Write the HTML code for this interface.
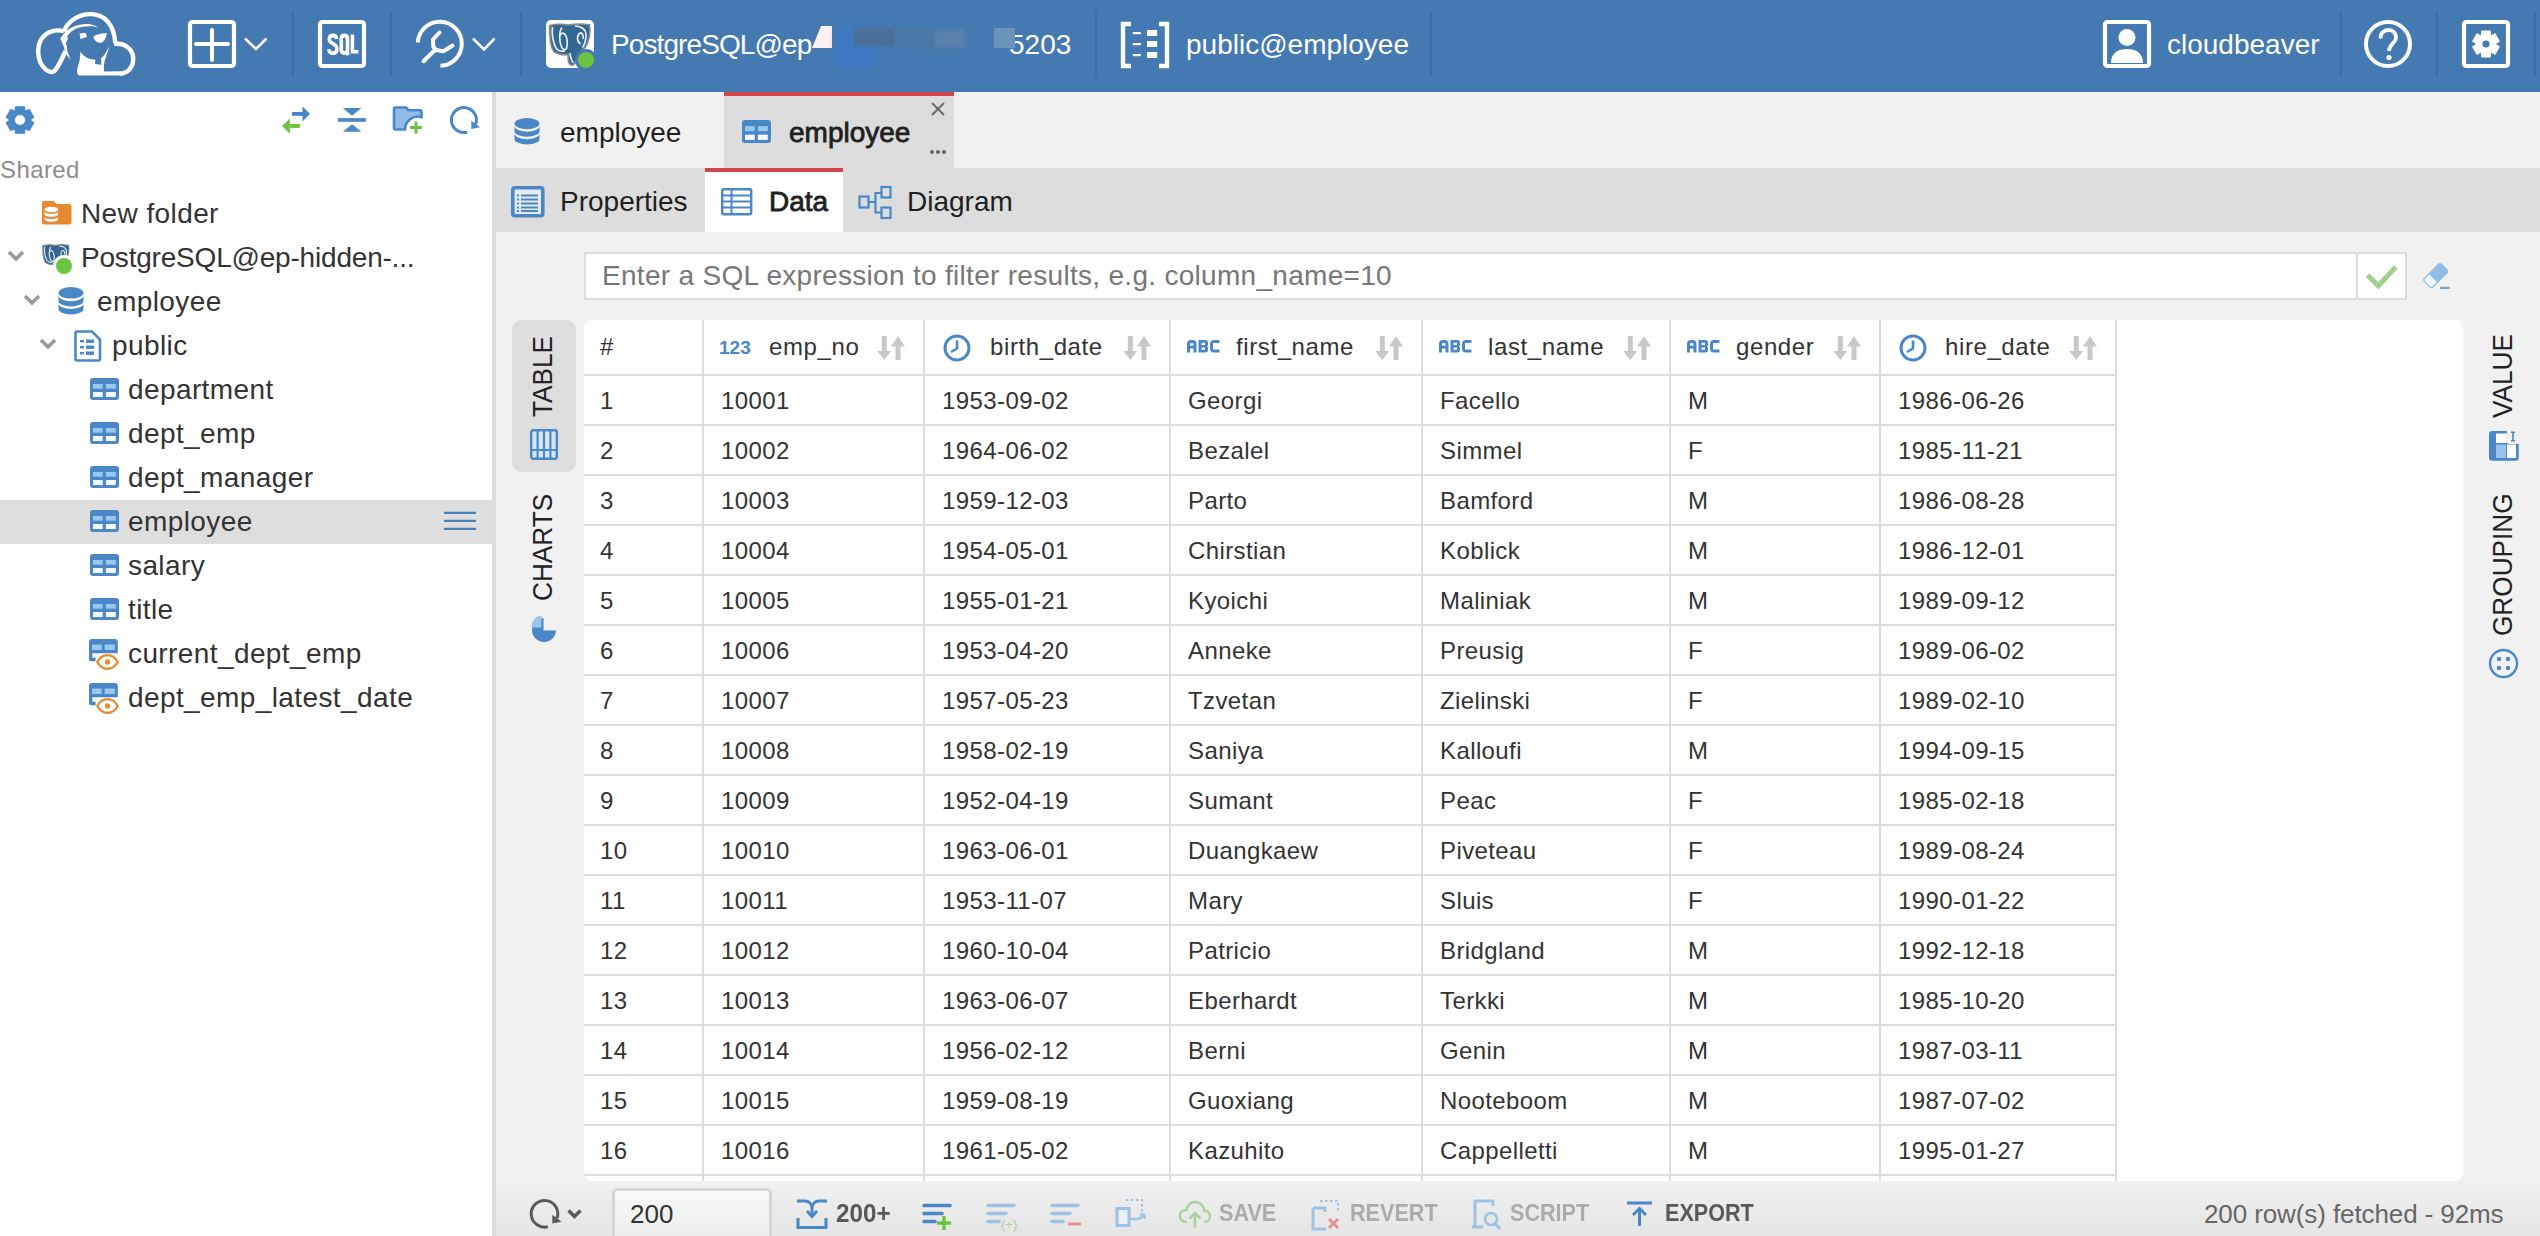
<!DOCTYPE html>
<html><head><meta charset="utf-8"><title>CloudBeaver</title>
<style>
*{box-sizing:border-box;margin:0;padding:0}
html,body{width:2540px;height:1236px;overflow:hidden;background:#f1f1f1;font-family:"Liberation Sans",sans-serif;position:relative}
.a{position:absolute}
.t{position:absolute;white-space:nowrap;line-height:1}
svg{position:absolute;overflow:visible}
#top{left:0;top:0;width:2540px;height:92px;background:#4479b1}
.sep{position:absolute;top:12px;width:2px;height:64px;background:#3c6ea3}
.tw{color:#fff;font-size:28px;top:30.5px}
#side{left:0;top:92px;width:492px;height:1144px;background:#fff}
#sdiv{left:492px;top:92px;width:4px;height:1144px;background:#dcdcdc}
.tr{font-size:28px;color:#333;letter-spacing:0.4px}
.tab{font-size:28px;color:#1f1f1f}
.tb{-webkit-text-stroke:0.8px #1f1f1f}
.cell{font-size:24px;color:#333;letter-spacing:0.4px}
.hdr{font-size:24px;color:#333;letter-spacing:0.6px}
.bt{font-size:24px;font-weight:bold;color:#ababab;transform-origin:0 0;transform:scaleX(.9)}
.vt{font-size:28px;color:#222;transform-origin:0 0;transform:rotate(-90deg) scaleX(.935)}
</style></head><body>
<div id="top" class="a"></div>
<div class="sep" style="left:292px"></div>
<div class="sep" style="left:390px"></div>
<div class="sep" style="left:520px"></div>
<div class="sep" style="left:1095px"></div>
<div class="sep" style="left:1430px"></div>
<div class="sep" style="left:2340px"></div>
<div class="sep" style="left:2436px"></div>
<div class="sep" style="left:2534px"></div>
<svg style="left:36px;top:11px" width="100" height="66" viewBox="0 0 100 66">
<g fill="none" stroke="#fff" stroke-width="4.4">
<path d="M27.9 20.6 C31 11, 42 3, 54.7 3.1 C68 3, 78 13, 79.3 32"/>
<path d="M78 32.9 C90 31.5, 97.5 39, 97.2 48.5 C97 57, 91 62.5, 84 62.5"/>
<path d="M28 20.2 C20 18, 11 20, 5.5 28 C0.5 36, 1.5 48, 6.5 55 C10 60, 15 62.5, 18.5 60 C22 56, 26 48, 29.5 40"/>
</g>
<g fill="#fff">
<path d="M24.5 27.5 C29 19, 38 13.5, 49.5 13 C55 12.8, 59.5 14, 62 16.8 C57 15, 52 15, 47 15.8 C38 17, 32 22, 29 30 Z"/>
<path d="M24.2 27 L32.4 26.2 L28.3 36.7 Z"/>
<path d="M27.9 33.7 C28 40, 30.5 45, 35.4 48.6 C32 44, 30.8 40, 31 34 Z"/>
<path d="M44.3 40.4 C44.5 45, 43.5 52, 41.3 57.5 C40.5 61, 41.5 63.5, 43 64.6 L87 64.6 L84 60.3 L68.1 60.5 C67.5 56, 68 51, 69.6 47.1 C71 43, 72.5 39, 73 35.2 C71 40, 68 45, 65.2 47 L65.2 53.8 L59.2 53 L59.2 48.6 C53 48.5, 47.5 45.5, 44.3 40.4 Z"/>
<path d="M43.6 22.5 L49.5 21.8 L51 25.9 L44.3 28.1 Z"/>
<path d="M57.3 26.2 C59 24, 63 22.5, 71.1 22.1 C70.5 25, 69.5 27, 68.9 28.5 C67.5 30.5, 66.5 31.5, 65.2 31.8 C63 31.8, 61.5 31.3, 60.7 30.7 C59 29.5, 58 28, 57.3 26.2 Z"/>
</g>
</svg>
<svg style="left:186px;top:18px" width="84" height="52" viewBox="0 0 84 52">
<rect x="4" y="4" width="44" height="44" rx="2.5" fill="none" stroke="#fff" stroke-width="4.2"/>
<path d="M26 12V42M10 26H42" stroke="#fff" stroke-width="4" stroke-linecap="round"/>
<path d="M59 20.5L70 31L80.5 20.5" fill="none" stroke="#fff" stroke-width="2.6"/>
</svg>
<svg style="left:316px;top:18px" width="52" height="52" viewBox="0 0 52 52">
<rect x="4" y="4" width="44" height="44" rx="2.5" fill="none" stroke="#fff" stroke-width="4.2"/>
<g fill="none" stroke="#fff" stroke-width="3.6">
<path d="M20.6 21 C20.4 18.8, 19.2 17.4, 17 17.4 C14.6 17.4, 13.3 18.9, 13.3 21.2 C13.3 23.6, 15 24.7, 17 25.6 C19.4 26.7, 20.9 28, 20.9 31 C20.9 33.9, 19.5 35.2, 17 35.2 C14.5 35.2, 13 33.8, 12.9 31.2"/>
<path d="M28.4 17.4 C26.3 17.4, 25.3 18.7, 25.3 21 V31.6 C25.3 33.9, 26.3 35.2, 28.4 35.2 C30.5 35.2, 31.5 33.9, 31.5 31.6 V21 C31.5 18.7, 30.5 17.4, 28.4 17.4Z"/>
<path d="M29.3 33 L32.5 37"/>
<path d="M36.4 16.6 V33.7 H42.4"/>
</g>
</svg>
<svg style="left:412px;top:16px" width="88" height="56" viewBox="0 0 88 56">
<path d="M5.8 26.5 A22 22 0 1 1 28.5 49.8" fill="none" stroke="#fff" stroke-width="4"/>
<path d="M11.5 45.2 L23.5 33.5" stroke="#fff" stroke-width="4" stroke-linecap="round"/>
<path d="M27.5 16.5 L21 23.5 L21.3 30.5 L23.8 34 L31.5 35.3 L40.5 29.5" fill="none" stroke="#fff" stroke-width="4" stroke-linecap="round" stroke-linejoin="round"/>
<path d="M61 22.5L72 33.5L82.5 22.5" fill="none" stroke="#fff" stroke-width="2.6"/>
</svg>
<div class="a" style="left:546px;top:20px;width:48px;height:48px;background:#fff;border-radius:5px"></div>
<svg style="left:549px;top:23px" width="42" height="43" viewBox="0 0 42 43">
<path d="M0.6 2.5 C8 0.5, 14 1, 20 2 C27 0.5, 34 0.8, 40.5 1.8 C41.5 9, 40 18, 36.6 23.8 C35 26, 34 27, 32.7 27.2 C30 31, 28 36, 26.4 39.3 C25.5 41.5, 24.5 42.3, 23 42.3 C21 42, 20 40.5, 19.6 39.3 C19 36, 19.2 33, 19.1 31.6 C16 31.8, 13 31.5, 10.9 31.1 C8 30.5, 6 29.5, 5 28.7 C3 26, 2 23, 1.7 20 C1 15, 0.5 8, 0.6 2.5 Z" fill="#336791" stroke="#8a8a8a" stroke-width="1.6"/>
<g fill="none" stroke="#e8eef8" stroke-width="1.7">
<path d="M3.5 4 C2.5 10, 4 20, 7 25 C9 28, 13 28.5, 16 28"/>
<path d="M13 4.5 C10 8, 10 18, 12.5 24 C13.5 26.5, 16 27.5, 17.5 25.5 C19 22, 18.5 13, 15 10.5 C13 9.5, 11.5 11, 11 13"/>
<path d="M26 3 C33 3.5, 37 6, 37 12 C37 17, 36 21, 33.5 24.5"/>
<path d="M31.5 21 C28 19, 27.5 13, 30.5 10.5 C32.5 9, 35 11.5, 34 16"/>
<path d="M21 30 C21.5 34, 22.5 38, 24.5 40"/>
</g>
</svg>
<div class="a" style="left:575px;top:49px;width:22px;height:22px;border-radius:50%;background:#4479b1"></div>
<div class="a" style="left:578px;top:52px;width:16px;height:16px;border-radius:50%;background:#6cc241"></div>
<div class="t tw" style="left:611px;letter-spacing:-0.9px">PostgreSQL@ep</div>
<div class="a" style="left:812px;top:26px;width:20px;height:22px;background:#fdf1f3;clip-path:polygon(45% 0,100% 0,100% 100%,0 100%)"></div>
<div class="a" style="left:836px;top:28px;width:40px;height:40px;background:#3d79c2;filter:blur(3px)"></div>
<div class="a" style="left:854px;top:28px;width:40px;height:18px;background:#4a6f98;filter:blur(1px)"></div>
<div class="a" style="left:895px;top:28px;width:44px;height:20px;background:#4a78a6;filter:blur(2px)"></div>
<div class="a" style="left:935px;top:30px;width:30px;height:18px;background:#5a82ab;filter:blur(2px)"></div>

<div class="t tw" style="left:1009px">5203</div>
<div class="a" style="left:994px;top:28px;width:21px;height:20px;background:#6b93bc"></div>
<svg style="left:1118px;top:20px" width="54" height="48" viewBox="0 0 54 48">
<path d="M13 4H5V46H13" fill="none" stroke="#fff" stroke-width="4.4"/>
<path d="M41 4H49V46H41" fill="none" stroke="#fff" stroke-width="4.4"/>
<rect x="14.8" y="12" width="8.2" height="2.2" fill="#fff"/>
<rect x="14.8" y="23" width="8.2" height="2.2" fill="#fff"/>
<rect x="14.8" y="34" width="8.2" height="2.2" fill="#fff"/>
<rect x="29" y="10" width="10.2" height="6" fill="#fff"/>
<rect x="29" y="21" width="10.2" height="6" fill="#fff"/>
<rect x="29" y="32" width="10.2" height="6" fill="#fff"/>
</svg>
<div class="t tw" style="left:1186px">public@employee</div>
<svg style="left:2101px;top:18px" width="52" height="52" viewBox="0 0 52 52">
<rect x="4" y="4" width="44" height="44" rx="2.5" fill="none" stroke="#fff" stroke-width="4.2"/>
<circle cx="26" cy="19.5" r="8.5" fill="#fff"/>
<path d="M10 45 C10 35 17 31 26 31 C35 31 42 35 42 45 Z" fill="#fff"/>
</svg>
<div class="t tw" style="left:2167px">cloudbeaver</div>
<svg style="left:2362px;top:18px" width="52" height="52" viewBox="0 0 52 52">
<circle cx="26" cy="26" r="22" fill="none" stroke="#fff" stroke-width="4"/>
<path d="M18.5 20.5 C18.5 15 22 12 26.5 12 C31 12 34 15 34 19.5 C34 25 27 26 27 33" fill="none" stroke="#fff" stroke-width="3.8"/>
<circle cx="27" cy="39.5" r="2.6" fill="#fff"/>
</svg>
<svg style="left:2460px;top:18px" width="52" height="52" viewBox="0 0 52 52">
<rect x="4" y="4" width="44" height="44" rx="2.5" fill="none" stroke="#fff" stroke-width="4.2"/>
<path d="M21.64 17.45 L21.69 13.21 L30.31 13.21 L30.36 17.45 L31.23 17.95 L34.93 15.87 L39.23 23.33 L35.59 25.50 L35.59 26.50 L39.23 28.67 L34.93 36.13 L31.23 34.05 L30.36 34.55 L30.31 38.79 L21.69 38.79 L21.64 34.55 L20.77 34.05 L17.07 36.13 L12.77 28.67 L16.41 26.50 L16.41 25.50 L12.77 23.33 L17.07 15.87 L20.77 17.95Z" fill="#fff" stroke="#fff" stroke-width="1.2" stroke-linejoin="round"/><circle cx="26" cy="26" r="3.6" fill="#4479b1"/>
</svg>
<div id="side" class="a"></div><div id="sdiv" class="a"></div>
<svg style="left:4px;top:104px" width="32" height="32" viewBox="0 0 32 32"><path d="M11.19 6.56 L11.53 2.73 L20.47 2.73 L20.81 6.56 L21.77 7.11 L25.26 5.50 L29.72 13.23 L26.59 15.45 L26.59 16.55 L29.72 18.77 L25.26 26.50 L21.77 24.89 L20.81 25.44 L20.47 29.27 L11.53 29.27 L11.19 25.44 L10.23 24.89 L6.74 26.50 L2.28 18.77 L5.41 16.55 L5.41 15.45 L2.28 13.23 L6.74 5.50 L10.23 7.11Z" fill="#4a87c7" stroke="#4a87c7" stroke-width="1.2" stroke-linejoin="round"/><circle cx="16" cy="16" r="5" fill="#fff"/></svg>
<svg style="left:280px;top:104px" width="32" height="32" viewBox="0 0 32 32">
<rect x="12" y="8" width="11" height="3.8" fill="#4a87c7"/><path d="M22.5 2.4 L30 9.8 L22.5 17.5Z" fill="#4a87c7"/>
<rect x="9.9" y="19.9" width="10" height="4" fill="#6cc241"/><path d="M9.9 14.5 L2.1 21.9 L9.9 29.7Z" fill="#6cc241"/>
</svg>
<svg style="left:336px;top:104px" width="32" height="32" viewBox="0 0 32 32">
<path d="M6.8 4.1 H25.4 L16.1 11.7Z" fill="#4a87c7"/><rect x="2" y="14.1" width="27.9" height="3.7" fill="#4a87c7"/><path d="M16.1 20.2 L6.8 27.7 H25.4Z" fill="#4a87c7"/>
</svg>
<svg style="left:392px;top:104px" width="32" height="32" viewBox="0 0 32 32">
<path d="M3.5 3.5 H14 L16.5 6.2 H28 A1.5 1.5 0 0 1 29.5 7.7 V13 A13 13 0 0 0 13 25.5 H3.5 A1.5 1.5 0 0 1 2 24 V5 A1.5 1.5 0 0 1 3.5 3.5Z" fill="#8fbde6" stroke="#4a87c7" stroke-width="2.6"/>
<path d="M24 17.5V29.5M18 23.5H30" stroke="#6cc241" stroke-width="3"/>
</svg>
<svg style="left:448px;top:104px" width="34" height="32" viewBox="0 0 34 32">
<path d="M19.2 28.1 A12.5 12.5 0 1 1 27.7 20.2" fill="none" stroke="#4a87c7" stroke-width="3"/>
<path d="M23.3 16.8 L23.3 24.9 L32 23.3Z" fill="#4a87c7"/>
</svg>
<div class="t" style="left:0;top:158px;font-size:24px;color:#8c8c8c;letter-spacing:0.4px">Shared</div>
<div class="a" style="left:0;top:500px;width:492px;height:44px;background:#dedede"></div>
<svg style="left:444px;top:511px" width="32" height="20" viewBox="0 0 32 20"><path d="M0 1.8H32M0 9.8H32M0 17.8H32" stroke="#4a80b8" stroke-width="2.2"/></svg>
<svg style="left:42px;top:201px" width="30" height="25" viewBox="0 0 30 25">
<path d="M0 2 A2 2 0 0 1 2 0 H12 L14.5 3 H27 A2.5 2.5 0 0 1 29.5 5.5 V21.5 A2 2 0 0 1 27.5 23.5 H2 A2 2 0 0 1 0 21.5Z" fill="#e8892f"/>
<ellipse cx="9.3" cy="8.5" rx="6.8" ry="2.8" fill="#fff"/>
<path d="M2.5 10.8 C3.5 13.5 15 13.5 16.1 10.8 V13.7 C15 16.4 3.5 16.4 2.5 13.7Z" fill="#fff"/>
<path d="M2.5 15.9 C3.5 18.6 15 18.6 16.1 15.9 V18.6 C15 21.5 3.5 21.5 2.5 18.6Z" fill="#fff"/>
</svg>
<div class="t tr" style="left:81px;top:200px">New folder</div>
<svg style="left:7px;top:250px" width="18" height="12" viewBox="0 0 18 12"><path d="M2 2L9 9L16 2" fill="none" stroke="#9a9a9a" stroke-width="3.6"/></svg>
<svg style="left:42px;top:244px" width="28" height="28" viewBox="0 0 42 43">
<path d="M0.6 2.5 C8 0.5, 14 1, 20 2 C27 0.5, 34 0.8, 40.5 1.8 C41.5 9, 40 18, 36.6 23.8 C35 26, 34 27, 32.7 27.2 C30 31, 28 36, 26.4 39.3 C25.5 41.5, 24.5 42.3, 23 42.3 C21 42, 20 40.5, 19.6 39.3 C19 36, 19.2 33, 19.1 31.6 C16 31.8, 13 31.5, 10.9 31.1 C8 30.5, 6 29.5, 5 28.7 C3 26, 2 23, 1.7 20 C1 15, 0.5 8, 0.6 2.5 Z" fill="#336791" stroke="#8a8a8a" stroke-width="1.6"/>
<g fill="none" stroke="#e8eef8" stroke-width="1.7">
<path d="M3.5 4 C2.5 10, 4 20, 7 25 C9 28, 13 28.5, 16 28"/>
<path d="M13 4.5 C10 8, 10 18, 12.5 24 C13.5 26.5, 16 27.5, 17.5 25.5 C19 22, 18.5 13, 15 10.5 C13 9.5, 11.5 11, 11 13"/>
<path d="M26 3 C33 3.5, 37 6, 37 12 C37 17, 36 21, 33.5 24.5"/>
<path d="M31.5 21 C28 19, 27.5 13, 30.5 10.5 C32.5 9, 35 11.5, 34 16"/>
<path d="M21 30 C21.5 34, 22.5 38, 24.5 40"/>
</g>
</svg>
<div class="a" style="left:53px;top:255px;width:22px;height:22px;border-radius:50%;background:#fff"></div>
<div class="a" style="left:56px;top:258px;width:16px;height:16px;border-radius:50%;background:#6cc241"></div>
<div class="t tr" style="left:81px;top:244px;letter-spacing:-0.2px">PostgreSQL@ep-hidden-...</div>
<svg style="left:23px;top:294px" width="18" height="12" viewBox="0 0 18 12"><path d="M2 2L9 9L16 2" fill="none" stroke="#9a9a9a" stroke-width="3.6"/></svg>
<svg style="left:58px;top:287px" width="26" height="28" viewBox="0 0 26 26.5" preserveAspectRatio="none">
<ellipse cx="13" cy="5.5" rx="12.5" ry="5.5" fill="#4a87c7"/>
<path d="M0.5 7.9 A12.5 5.5 0 0 0 25.5 7.9 V12.9 A12.5 5.5 0 0 1 0.5 12.9Z" fill="#4a87c7"/>
<path d="M0.5 15.3 A12.5 5.5 0 0 0 25.5 15.3 V20.5 A12.5 5.5 0 0 1 0.5 20.5Z" fill="#4a87c7"/>
</svg>
<div class="t tr" style="left:97px;top:288px">employee</div>
<svg style="left:39px;top:338px" width="18" height="12" viewBox="0 0 18 12"><path d="M2 2L9 9L16 2" fill="none" stroke="#9a9a9a" stroke-width="3.6"/></svg>
<svg style="left:74px;top:330px" width="28" height="32" viewBox="0 0 28 32">
<path d="M3 1.5 H18 L26 9.5 V29 A1.5 1.5 0 0 1 24.5 30.5 H3 A1.5 1.5 0 0 1 1.5 29 V3 A1.5 1.5 0 0 1 3 1.5Z" fill="#fff" stroke="#4a87c7" stroke-width="2.6"/>
<rect x="6" y="10" width="4" height="2.4" fill="#4a87c7"/><rect x="12" y="9.5" width="8" height="3.4" fill="#4a87c7"/>
<rect x="6" y="16" width="4" height="2.4" fill="#4a87c7"/><rect x="12" y="15.5" width="8" height="3.4" fill="#4a87c7"/>
<rect x="6" y="22" width="4" height="2.4" fill="#4a87c7"/><rect x="12" y="21.5" width="8" height="3.4" fill="#4a87c7"/>
</svg>
<div class="t tr" style="left:112px;top:332px">public</div>
<svg style="left:90px;top:378px" width="29" height="22" viewBox="0 0 29 22.3" preserveAspectRatio="none">
<rect x="0" y="0" width="29" height="22.3" rx="3" fill="#4a87c7"/>
<rect x="3" y="6" width="9.7" height="4.8" fill="#98c8f0"/>
<rect x="15.9" y="6" width="9.9" height="4.8" fill="#98c8f0"/>
<rect x="3" y="14.2" width="9.7" height="5.1" fill="#f4faff"/>
<rect x="15.9" y="14.2" width="9.9" height="5.1" fill="#f4faff"/>
</svg>
<div class="t tr" style="left:128px;top:376px">department</div>
<svg style="left:90px;top:422px" width="29" height="22" viewBox="0 0 29 22.3" preserveAspectRatio="none">
<rect x="0" y="0" width="29" height="22.3" rx="3" fill="#4a87c7"/>
<rect x="3" y="6" width="9.7" height="4.8" fill="#98c8f0"/>
<rect x="15.9" y="6" width="9.9" height="4.8" fill="#98c8f0"/>
<rect x="3" y="14.2" width="9.7" height="5.1" fill="#f4faff"/>
<rect x="15.9" y="14.2" width="9.9" height="5.1" fill="#f4faff"/>
</svg>
<div class="t tr" style="left:128px;top:420px">dept_emp</div>
<svg style="left:90px;top:466px" width="29" height="22" viewBox="0 0 29 22.3" preserveAspectRatio="none">
<rect x="0" y="0" width="29" height="22.3" rx="3" fill="#4a87c7"/>
<rect x="3" y="6" width="9.7" height="4.8" fill="#98c8f0"/>
<rect x="15.9" y="6" width="9.9" height="4.8" fill="#98c8f0"/>
<rect x="3" y="14.2" width="9.7" height="5.1" fill="#f4faff"/>
<rect x="15.9" y="14.2" width="9.9" height="5.1" fill="#f4faff"/>
</svg>
<div class="t tr" style="left:128px;top:464px">dept_manager</div>
<svg style="left:90px;top:510px" width="29" height="22" viewBox="0 0 29 22.3" preserveAspectRatio="none">
<rect x="0" y="0" width="29" height="22.3" rx="3" fill="#4a87c7"/>
<rect x="3" y="6" width="9.7" height="4.8" fill="#98c8f0"/>
<rect x="15.9" y="6" width="9.9" height="4.8" fill="#98c8f0"/>
<rect x="3" y="14.2" width="9.7" height="5.1" fill="#f4faff"/>
<rect x="15.9" y="14.2" width="9.9" height="5.1" fill="#f4faff"/>
</svg>
<div class="t tr" style="left:128px;top:508px">employee</div>
<svg style="left:90px;top:554px" width="29" height="22" viewBox="0 0 29 22.3" preserveAspectRatio="none">
<rect x="0" y="0" width="29" height="22.3" rx="3" fill="#4a87c7"/>
<rect x="3" y="6" width="9.7" height="4.8" fill="#98c8f0"/>
<rect x="15.9" y="6" width="9.9" height="4.8" fill="#98c8f0"/>
<rect x="3" y="14.2" width="9.7" height="5.1" fill="#f4faff"/>
<rect x="15.9" y="14.2" width="9.9" height="5.1" fill="#f4faff"/>
</svg>
<div class="t tr" style="left:128px;top:552px">salary</div>
<svg style="left:90px;top:598px" width="29" height="22" viewBox="0 0 29 22.3" preserveAspectRatio="none">
<rect x="0" y="0" width="29" height="22.3" rx="3" fill="#4a87c7"/>
<rect x="3" y="6" width="9.7" height="4.8" fill="#98c8f0"/>
<rect x="15.9" y="6" width="9.9" height="4.8" fill="#98c8f0"/>
<rect x="3" y="14.2" width="9.7" height="5.1" fill="#f4faff"/>
<rect x="15.9" y="14.2" width="9.9" height="5.1" fill="#f4faff"/>
</svg>
<div class="t tr" style="left:128px;top:596px">title</div>
<svg style="left:89px;top:639px" width="32" height="32" viewBox="0 0 32 32">
<path d="M0 3 A3 3 0 0 1 3 0 H25.8 A3 3 0 0 1 28.8 3 V14.2 H0Z" fill="#4a87c7"/>
<rect x="3" y="5.5" width="9.7" height="5.5" fill="#98c8f0"/>
<rect x="15.7" y="5.5" width="10.3" height="5.5" fill="#98c8f0"/>
<path d="M0 14 V20 A2.3 2.3 0 0 0 2.3 22.3 H6.6 V18.8 H3.4 V14Z" fill="#4a87c7"/>
<path d="M8.3 23 C10.5 19, 14 16.2, 18.5 16.2 C23 16.2, 26.5 19, 28.7 23 C26.5 27, 23 29.8, 18.5 29.8 C14 29.8, 10.5 27, 8.3 23Z" fill="#fff" stroke="#e8892f" stroke-width="2.2"/>
<circle cx="18.5" cy="23" r="2.7" fill="#e8892f"/>
</svg>
<div class="t tr" style="left:128px;top:640px">current_dept_emp</div>
<svg style="left:89px;top:683px" width="32" height="32" viewBox="0 0 32 32">
<path d="M0 3 A3 3 0 0 1 3 0 H25.8 A3 3 0 0 1 28.8 3 V14.2 H0Z" fill="#4a87c7"/>
<rect x="3" y="5.5" width="9.7" height="5.5" fill="#98c8f0"/>
<rect x="15.7" y="5.5" width="10.3" height="5.5" fill="#98c8f0"/>
<path d="M0 14 V20 A2.3 2.3 0 0 0 2.3 22.3 H6.6 V18.8 H3.4 V14Z" fill="#4a87c7"/>
<path d="M8.3 23 C10.5 19, 14 16.2, 18.5 16.2 C23 16.2, 26.5 19, 28.7 23 C26.5 27, 23 29.8, 18.5 29.8 C14 29.8, 10.5 27, 8.3 23Z" fill="#fff" stroke="#e8892f" stroke-width="2.2"/>
<circle cx="18.5" cy="23" r="2.7" fill="#e8892f"/>
</svg>
<div class="t tr" style="left:128px;top:684px">dept_emp_latest_date</div>
<div class="a" style="left:496px;top:92px;width:2044px;height:76px;background:#f1f1f1"></div>
<div class="a" style="left:724px;top:92px;width:230px;height:76px;background:#dcdcdc;border-top:4px solid #d2454c"></div>
<svg style="left:514px;top:118px" width="26" height="27" viewBox="0 0 26 26.5" preserveAspectRatio="none">
<ellipse cx="13" cy="5.5" rx="12.5" ry="5.5" fill="#4a87c7"/>
<path d="M0.5 7.9 A12.5 5.5 0 0 0 25.5 7.9 V12.9 A12.5 5.5 0 0 1 0.5 12.9Z" fill="#4a87c7"/>
<path d="M0.5 15.3 A12.5 5.5 0 0 0 25.5 15.3 V20.5 A12.5 5.5 0 0 1 0.5 20.5Z" fill="#4a87c7"/>
</svg>
<div class="t tab" style="left:560px;top:119px">employee</div>
<svg style="left:742px;top:120px" width="29" height="23" viewBox="0 0 29 22.3" preserveAspectRatio="none">
<rect x="0" y="0" width="29" height="22.3" rx="3" fill="#4a87c7"/>
<rect x="3" y="6" width="9.7" height="4.8" fill="#98c8f0"/>
<rect x="15.9" y="6" width="9.9" height="4.8" fill="#98c8f0"/>
<rect x="3" y="14.2" width="9.7" height="5.1" fill="#f4faff"/>
<rect x="15.9" y="14.2" width="9.9" height="5.1" fill="#f4faff"/>
</svg>
<div class="t tab tb" style="left:789px;top:119px">employee</div>
<svg style="left:930px;top:101px" width="16" height="16" viewBox="0 0 16 16"><path d="M2 2L14 14M14 2L2 14" stroke="#6a6a6a" stroke-width="2"/></svg>
<svg style="left:929px;top:149px" width="18" height="6" viewBox="0 0 18 6"><circle cx="3" cy="3" r="2" fill="#666"/><circle cx="9" cy="3" r="2" fill="#666"/><circle cx="15" cy="3" r="2" fill="#666"/></svg>
<div class="a" style="left:496px;top:168px;width:2044px;height:64px;background:#dddddd"></div>
<div class="a" style="left:705px;top:168px;width:138px;height:64px;background:#fff;border-top:4px solid #d2454c"></div>
<svg style="left:511px;top:186px" width="34" height="32" viewBox="0 0 34 32">
<rect x="1.8" y="1.8" width="30" height="28" rx="2" fill="#e4ebf2" stroke="#4a87c7" stroke-width="3.6"/>
<path d="M10 9.5H27M10 13.5H27M10 17.5H27M10 21.5H27M10 25H27" stroke="#4a87c7" stroke-width="2"/>
<path d="M6 9.5H8M6 13.5H8M6 17.5H8M6 21.5H8M6 25H8" stroke="#4a87c7" stroke-width="2"/>
</svg>
<div class="t tab" style="left:560px;top:188px">Properties</div>
<svg style="left:721px;top:188px" width="32" height="28" viewBox="0 0 32 28">
<rect x="1.2" y="1.2" width="29" height="25" rx="1.5" fill="#fff" stroke="#4a87c7" stroke-width="2.4"/>
<path d="M1 7.5H30M1 13.5H30M1 19.5H30M10.5 1V26" stroke="#4a87c7" stroke-width="2"/>
</svg>
<div class="t tab tb" style="left:769px;top:188px">Data</div>
<svg style="left:858px;top:186px" width="34" height="33" viewBox="0 0 34 33">
<rect x="1.5" y="10.5" width="9" height="11" fill="none" stroke="#4a87c7" stroke-width="2.2"/>
<rect x="23.5" y="1" width="9" height="10.5" fill="none" stroke="#4a87c7" stroke-width="2.2"/>
<rect x="23.5" y="21.5" width="9" height="10.5" fill="none" stroke="#4a87c7" stroke-width="2.2"/>
<path d="M10.5 16H17.5M17.5 7H23.5M17.5 26.5H23.5M17.5 6V27.5" fill="none" stroke="#4a87c7" stroke-width="2.2"/>
</svg>
<div class="t tab" style="left:907px;top:188px">Diagram</div>
<div class="a" style="left:584px;top:252px;width:1823px;height:48px;background:#fff;border:2px solid #dcdcdc"></div>
<div class="a" style="left:2356px;top:252px;width:2px;height:48px;background:#dcdcdc"></div>
<div class="t" style="left:602px;top:262px;font-size:28px;color:#777;letter-spacing:0.3px">Enter a SQL expression to filter results, e.g. column_name=10</div>
<svg style="left:2360px;top:260px" width="40" height="32" viewBox="0 0 40 32"><path d="M7.6 15.1L18.4 25.8L35.8 6.9" fill="none" stroke="#a2cf8e" stroke-width="5"/></svg>
<svg style="left:2420px;top:261px" width="34" height="32" viewBox="0 0 34 32">
<g transform="translate(15.7 14.7) rotate(-45)">
<rect x="-12.6" y="-6.7" width="25.3" height="13.4" rx="3" fill="#8fbde6"/>
<path d="M-3.6 -5.3 H-10 A1.8 1.8 0 0 0 -11.4 -3.5 V3.5 A1.8 1.8 0 0 0 -10 5.3 H-3.6Z" fill="#eef6fd"/>
</g>
<path d="M20 26.9H29.8" stroke="#7f9fcb" stroke-width="2.2"/>
</svg>
<div class="a" style="left:512px;top:320px;width:64px;height:152px;background:#dedede;border-radius:10px"></div>
<div class="t vt" style="left:529px;top:417px">TABLE</div>
<svg style="left:530px;top:429px" width="28" height="31" viewBox="0 0 28 31">
<rect x="1.2" y="1.2" width="25.6" height="28.6" rx="2" fill="#d8e7f6" stroke="#4a87c7" stroke-width="2.4"/>
<path d="M7.6 1V30M14 1V30M20.4 1V30M1 21H27" stroke="#4a87c7" stroke-width="2.2"/>
</svg>
<div class="t vt" style="left:529px;top:601px">CHARTS</div>
<svg style="left:531px;top:614px" width="28" height="30" viewBox="0 0 28 30">
<path d="M12.5 4 A12 12 0 1 0 25 16.5 H12.5Z" fill="#4a87c7"/>
<path d="M10.5 1.5 V13.5 H0.5 A11 11 0 0 1 10.5 1.5Z" fill="#9ec6ec"/>
</svg>
<div class="t vt" style="left:2489px;top:418px">VALUE</div>
<svg style="left:2488px;top:430px" width="32" height="32" viewBox="0 0 32 32">
<path d="M4 1 H18.8 V13 H20 V14 H30.8 V27.8 A3 3 0 0 1 27.8 30.8 H4 A3 3 0 0 1 1 27.8 V4 A3 3 0 0 1 4 1Z" fill="#4a87c7"/>
<rect x="8" y="3.5" width="10.8" height="9.5" fill="#fff"/>
<rect x="8" y="14.5" width="10" height="13.5" fill="#98c4ea"/>
<rect x="19" y="14.5" width="9" height="13.5" fill="#fff"/>
<path d="M23 2.2H27M25 2.2V10.8M23 10.8H27" stroke="#4a87c7" stroke-width="1.6"/>
</svg>
<div class="t vt" style="left:2489px;top:636px">GROUPING</div>
<svg style="left:2488px;top:648px" width="32" height="31" viewBox="0 0 32 31">
<circle cx="15.5" cy="15.5" r="13.5" fill="none" stroke="#4a87c7" stroke-width="2.4"/>
<circle cx="11" cy="11" r="2.2" fill="#4a87c7"/><circle cx="20" cy="11" r="2.2" fill="#4a87c7"/>
<circle cx="11" cy="20" r="2.2" fill="#4a87c7"/><circle cx="20" cy="20" r="2.2" fill="#4a87c7"/>
</svg>
<div class="a" style="left:584px;top:320px;width:1879px;height:861px;background:#fff;border-radius:8px;overflow:hidden">
<div class="a" style="left:118px;top:0;width:2px;height:861px;background:#dcdcdc"></div>
<div class="a" style="left:339px;top:0;width:2px;height:861px;background:#dcdcdc"></div>
<div class="a" style="left:585px;top:0;width:2px;height:861px;background:#dcdcdc"></div>
<div class="a" style="left:837px;top:0;width:2px;height:861px;background:#dcdcdc"></div>
<div class="a" style="left:1085px;top:0;width:2px;height:861px;background:#dcdcdc"></div>
<div class="a" style="left:1295px;top:0;width:2px;height:861px;background:#dcdcdc"></div>
<div class="a" style="left:1531px;top:0;width:2px;height:861px;background:#dcdcdc"></div>
<div class="a" style="left:0;top:54px;width:1533px;height:2px;background:#dcdcdc"></div>
<div class="a" style="left:0;top:104px;width:1533px;height:2px;background:#dcdcdc"></div>
<div class="a" style="left:0;top:154px;width:1533px;height:2px;background:#dcdcdc"></div>
<div class="a" style="left:0;top:204px;width:1533px;height:2px;background:#dcdcdc"></div>
<div class="a" style="left:0;top:254px;width:1533px;height:2px;background:#dcdcdc"></div>
<div class="a" style="left:0;top:304px;width:1533px;height:2px;background:#dcdcdc"></div>
<div class="a" style="left:0;top:354px;width:1533px;height:2px;background:#dcdcdc"></div>
<div class="a" style="left:0;top:404px;width:1533px;height:2px;background:#dcdcdc"></div>
<div class="a" style="left:0;top:454px;width:1533px;height:2px;background:#dcdcdc"></div>
<div class="a" style="left:0;top:504px;width:1533px;height:2px;background:#dcdcdc"></div>
<div class="a" style="left:0;top:554px;width:1533px;height:2px;background:#dcdcdc"></div>
<div class="a" style="left:0;top:604px;width:1533px;height:2px;background:#dcdcdc"></div>
<div class="a" style="left:0;top:654px;width:1533px;height:2px;background:#dcdcdc"></div>
<div class="a" style="left:0;top:704px;width:1533px;height:2px;background:#dcdcdc"></div>
<div class="a" style="left:0;top:754px;width:1533px;height:2px;background:#dcdcdc"></div>
<div class="a" style="left:0;top:804px;width:1533px;height:2px;background:#dcdcdc"></div>
<div class="a" style="left:0;top:854px;width:1533px;height:2px;background:#dcdcdc"></div>
<div class="a" style="left:0;top:904px;width:1533px;height:2px;background:#dcdcdc"></div>
</div>
<div class="t hdr" style="left:600px;top:335px">#</div>
<div class="t hdr" style="left:769px;top:335px">emp_no</div>
<div class="t hdr" style="left:990px;top:335px">birth_date</div>
<div class="t hdr" style="left:1236px;top:335px">first_name</div>
<div class="t hdr" style="left:1488px;top:335px">last_name</div>
<div class="t hdr" style="left:1736px;top:335px">gender</div>
<div class="t hdr" style="left:1945px;top:335px">hire_date</div>
<div class="t" style="left:719px;top:338px;font-size:19px;font-weight:bold;color:#4a87c7">123</div>
<svg style="left:943px;top:334px" width="28" height="28" viewBox="0 0 28 28"><circle cx="14" cy="14" r="12" fill="none" stroke="#4a87c7" stroke-width="3"/><path d="M14 6.5V14.5L8 18" fill="none" stroke="#4a87c7" stroke-width="2.6"/></svg>
<svg style="left:1899px;top:334px" width="28" height="28" viewBox="0 0 28 28"><circle cx="14" cy="14" r="12" fill="none" stroke="#4a87c7" stroke-width="3"/><path d="M14 6.5V14.5L8 18" fill="none" stroke="#4a87c7" stroke-width="2.6"/></svg>
<svg style="left:1187px;top:340px" width="33" height="13" viewBox="0 0 33 13"><path fill-rule="evenodd" fill="#4a87c7" d="M0 12.5V4Q0 0 4 0H5.5Q9.5 0 9.5 4V12.5H6.5V8.6H3V12.5Z M3 3.2H6.5V5.8H3Z M11.5 0H18.5Q21 0 21 3V4.6Q21 6 20 6.25Q21 6.5 21 8V9.5Q21 12.5 18.5 12.5H11.5Z M14.5 2.8H18V5H14.5Z M14.5 7.5H18V9.8H14.5Z M23 4Q23 0 27 0H32.5V3H26V9.5H32.5V12.5H27Q23 12.5 23 8.5Z"/></svg>
<svg style="left:1439px;top:340px" width="33" height="13" viewBox="0 0 33 13"><path fill-rule="evenodd" fill="#4a87c7" d="M0 12.5V4Q0 0 4 0H5.5Q9.5 0 9.5 4V12.5H6.5V8.6H3V12.5Z M3 3.2H6.5V5.8H3Z M11.5 0H18.5Q21 0 21 3V4.6Q21 6 20 6.25Q21 6.5 21 8V9.5Q21 12.5 18.5 12.5H11.5Z M14.5 2.8H18V5H14.5Z M14.5 7.5H18V9.8H14.5Z M23 4Q23 0 27 0H32.5V3H26V9.5H32.5V12.5H27Q23 12.5 23 8.5Z"/></svg>
<svg style="left:1687px;top:340px" width="33" height="13" viewBox="0 0 33 13"><path fill-rule="evenodd" fill="#4a87c7" d="M0 12.5V4Q0 0 4 0H5.5Q9.5 0 9.5 4V12.5H6.5V8.6H3V12.5Z M3 3.2H6.5V5.8H3Z M11.5 0H18.5Q21 0 21 3V4.6Q21 6 20 6.25Q21 6.5 21 8V9.5Q21 12.5 18.5 12.5H11.5Z M14.5 2.8H18V5H14.5Z M14.5 7.5H18V9.8H14.5Z M23 4Q23 0 27 0H32.5V3H26V9.5H32.5V12.5H27Q23 12.5 23 8.5Z"/></svg>
<svg style="left:877px;top:336px" width="28" height="24" viewBox="0 0 28 24"><path d="M7.3 0V16" stroke="#c8c8c8" stroke-width="5"/><path d="M0.3 15H14.3L7.3 24Z" fill="#c8c8c8"/><path d="M21 9V24" stroke="#c8c8c8" stroke-width="5"/><path d="M14 10.5H28L21 0Z" fill="#c8c8c8"/></svg>
<svg style="left:1123px;top:336px" width="28" height="24" viewBox="0 0 28 24"><path d="M7.3 0V16" stroke="#c8c8c8" stroke-width="5"/><path d="M0.3 15H14.3L7.3 24Z" fill="#c8c8c8"/><path d="M21 9V24" stroke="#c8c8c8" stroke-width="5"/><path d="M14 10.5H28L21 0Z" fill="#c8c8c8"/></svg>
<svg style="left:1375px;top:336px" width="28" height="24" viewBox="0 0 28 24"><path d="M7.3 0V16" stroke="#c8c8c8" stroke-width="5"/><path d="M0.3 15H14.3L7.3 24Z" fill="#c8c8c8"/><path d="M21 9V24" stroke="#c8c8c8" stroke-width="5"/><path d="M14 10.5H28L21 0Z" fill="#c8c8c8"/></svg>
<svg style="left:1623px;top:336px" width="28" height="24" viewBox="0 0 28 24"><path d="M7.3 0V16" stroke="#c8c8c8" stroke-width="5"/><path d="M0.3 15H14.3L7.3 24Z" fill="#c8c8c8"/><path d="M21 9V24" stroke="#c8c8c8" stroke-width="5"/><path d="M14 10.5H28L21 0Z" fill="#c8c8c8"/></svg>
<svg style="left:1833px;top:336px" width="28" height="24" viewBox="0 0 28 24"><path d="M7.3 0V16" stroke="#c8c8c8" stroke-width="5"/><path d="M0.3 15H14.3L7.3 24Z" fill="#c8c8c8"/><path d="M21 9V24" stroke="#c8c8c8" stroke-width="5"/><path d="M14 10.5H28L21 0Z" fill="#c8c8c8"/></svg>
<svg style="left:2069px;top:336px" width="28" height="24" viewBox="0 0 28 24"><path d="M7.3 0V16" stroke="#c8c8c8" stroke-width="5"/><path d="M0.3 15H14.3L7.3 24Z" fill="#c8c8c8"/><path d="M21 9V24" stroke="#c8c8c8" stroke-width="5"/><path d="M14 10.5H28L21 0Z" fill="#c8c8c8"/></svg>
<div class="t cell" style="left:600px;top:389px">1</div>
<div class="t cell" style="left:721px;top:389px">10001</div>
<div class="t cell" style="left:942px;top:389px">1953-09-02</div>
<div class="t cell" style="left:1188px;top:389px">Georgi</div>
<div class="t cell" style="left:1440px;top:389px">Facello</div>
<div class="t cell" style="left:1688px;top:389px">M</div>
<div class="t cell" style="left:1898px;top:389px">1986-06-26</div>
<div class="t cell" style="left:600px;top:439px">2</div>
<div class="t cell" style="left:721px;top:439px">10002</div>
<div class="t cell" style="left:942px;top:439px">1964-06-02</div>
<div class="t cell" style="left:1188px;top:439px">Bezalel</div>
<div class="t cell" style="left:1440px;top:439px">Simmel</div>
<div class="t cell" style="left:1688px;top:439px">F</div>
<div class="t cell" style="left:1898px;top:439px">1985-11-21</div>
<div class="t cell" style="left:600px;top:489px">3</div>
<div class="t cell" style="left:721px;top:489px">10003</div>
<div class="t cell" style="left:942px;top:489px">1959-12-03</div>
<div class="t cell" style="left:1188px;top:489px">Parto</div>
<div class="t cell" style="left:1440px;top:489px">Bamford</div>
<div class="t cell" style="left:1688px;top:489px">M</div>
<div class="t cell" style="left:1898px;top:489px">1986-08-28</div>
<div class="t cell" style="left:600px;top:539px">4</div>
<div class="t cell" style="left:721px;top:539px">10004</div>
<div class="t cell" style="left:942px;top:539px">1954-05-01</div>
<div class="t cell" style="left:1188px;top:539px">Chirstian</div>
<div class="t cell" style="left:1440px;top:539px">Koblick</div>
<div class="t cell" style="left:1688px;top:539px">M</div>
<div class="t cell" style="left:1898px;top:539px">1986-12-01</div>
<div class="t cell" style="left:600px;top:589px">5</div>
<div class="t cell" style="left:721px;top:589px">10005</div>
<div class="t cell" style="left:942px;top:589px">1955-01-21</div>
<div class="t cell" style="left:1188px;top:589px">Kyoichi</div>
<div class="t cell" style="left:1440px;top:589px">Maliniak</div>
<div class="t cell" style="left:1688px;top:589px">M</div>
<div class="t cell" style="left:1898px;top:589px">1989-09-12</div>
<div class="t cell" style="left:600px;top:639px">6</div>
<div class="t cell" style="left:721px;top:639px">10006</div>
<div class="t cell" style="left:942px;top:639px">1953-04-20</div>
<div class="t cell" style="left:1188px;top:639px">Anneke</div>
<div class="t cell" style="left:1440px;top:639px">Preusig</div>
<div class="t cell" style="left:1688px;top:639px">F</div>
<div class="t cell" style="left:1898px;top:639px">1989-06-02</div>
<div class="t cell" style="left:600px;top:689px">7</div>
<div class="t cell" style="left:721px;top:689px">10007</div>
<div class="t cell" style="left:942px;top:689px">1957-05-23</div>
<div class="t cell" style="left:1188px;top:689px">Tzvetan</div>
<div class="t cell" style="left:1440px;top:689px">Zielinski</div>
<div class="t cell" style="left:1688px;top:689px">F</div>
<div class="t cell" style="left:1898px;top:689px">1989-02-10</div>
<div class="t cell" style="left:600px;top:739px">8</div>
<div class="t cell" style="left:721px;top:739px">10008</div>
<div class="t cell" style="left:942px;top:739px">1958-02-19</div>
<div class="t cell" style="left:1188px;top:739px">Saniya</div>
<div class="t cell" style="left:1440px;top:739px">Kalloufi</div>
<div class="t cell" style="left:1688px;top:739px">M</div>
<div class="t cell" style="left:1898px;top:739px">1994-09-15</div>
<div class="t cell" style="left:600px;top:789px">9</div>
<div class="t cell" style="left:721px;top:789px">10009</div>
<div class="t cell" style="left:942px;top:789px">1952-04-19</div>
<div class="t cell" style="left:1188px;top:789px">Sumant</div>
<div class="t cell" style="left:1440px;top:789px">Peac</div>
<div class="t cell" style="left:1688px;top:789px">F</div>
<div class="t cell" style="left:1898px;top:789px">1985-02-18</div>
<div class="t cell" style="left:600px;top:839px">10</div>
<div class="t cell" style="left:721px;top:839px">10010</div>
<div class="t cell" style="left:942px;top:839px">1963-06-01</div>
<div class="t cell" style="left:1188px;top:839px">Duangkaew</div>
<div class="t cell" style="left:1440px;top:839px">Piveteau</div>
<div class="t cell" style="left:1688px;top:839px">F</div>
<div class="t cell" style="left:1898px;top:839px">1989-08-24</div>
<div class="t cell" style="left:600px;top:889px">11</div>
<div class="t cell" style="left:721px;top:889px">10011</div>
<div class="t cell" style="left:942px;top:889px">1953-11-07</div>
<div class="t cell" style="left:1188px;top:889px">Mary</div>
<div class="t cell" style="left:1440px;top:889px">Sluis</div>
<div class="t cell" style="left:1688px;top:889px">F</div>
<div class="t cell" style="left:1898px;top:889px">1990-01-22</div>
<div class="t cell" style="left:600px;top:939px">12</div>
<div class="t cell" style="left:721px;top:939px">10012</div>
<div class="t cell" style="left:942px;top:939px">1960-10-04</div>
<div class="t cell" style="left:1188px;top:939px">Patricio</div>
<div class="t cell" style="left:1440px;top:939px">Bridgland</div>
<div class="t cell" style="left:1688px;top:939px">M</div>
<div class="t cell" style="left:1898px;top:939px">1992-12-18</div>
<div class="t cell" style="left:600px;top:989px">13</div>
<div class="t cell" style="left:721px;top:989px">10013</div>
<div class="t cell" style="left:942px;top:989px">1963-06-07</div>
<div class="t cell" style="left:1188px;top:989px">Eberhardt</div>
<div class="t cell" style="left:1440px;top:989px">Terkki</div>
<div class="t cell" style="left:1688px;top:989px">M</div>
<div class="t cell" style="left:1898px;top:989px">1985-10-20</div>
<div class="t cell" style="left:600px;top:1039px">14</div>
<div class="t cell" style="left:721px;top:1039px">10014</div>
<div class="t cell" style="left:942px;top:1039px">1956-02-12</div>
<div class="t cell" style="left:1188px;top:1039px">Berni</div>
<div class="t cell" style="left:1440px;top:1039px">Genin</div>
<div class="t cell" style="left:1688px;top:1039px">M</div>
<div class="t cell" style="left:1898px;top:1039px">1987-03-11</div>
<div class="t cell" style="left:600px;top:1089px">15</div>
<div class="t cell" style="left:721px;top:1089px">10015</div>
<div class="t cell" style="left:942px;top:1089px">1959-08-19</div>
<div class="t cell" style="left:1188px;top:1089px">Guoxiang</div>
<div class="t cell" style="left:1440px;top:1089px">Nooteboom</div>
<div class="t cell" style="left:1688px;top:1089px">M</div>
<div class="t cell" style="left:1898px;top:1089px">1987-07-02</div>
<div class="t cell" style="left:600px;top:1139px">16</div>
<div class="t cell" style="left:721px;top:1139px">10016</div>
<div class="t cell" style="left:942px;top:1139px">1961-05-02</div>
<div class="t cell" style="left:1188px;top:1139px">Kazuhito</div>
<div class="t cell" style="left:1440px;top:1139px">Cappelletti</div>
<div class="t cell" style="left:1688px;top:1139px">M</div>
<div class="t cell" style="left:1898px;top:1139px">1995-01-27</div>
<div class="a" style="left:496px;top:1181px;width:2044px;height:55px;background:linear-gradient(#f0f0f0,#e5e5e5)"></div>
<svg style="left:527px;top:1197px" width="60" height="34" viewBox="0 0 60 34"><path d="M20.9 29.65 A13.3 13.3 0 1 1 30 21.35" fill="none" stroke="#5a5a5a" stroke-width="3"/><path d="M25.3 17.8 L25.3 26.5 L34.5 24.7Z" fill="#5a5a5a"/><path d="M41.5 13.5L47.5 19.5L53.5 13.5" fill="none" stroke="#5a5a5a" stroke-width="3.4"/></svg>
<div class="a" style="left:612px;top:1188px;width:160px;height:60px;background:linear-gradient(#f9f9f9,#ebebeb);border:3px solid #d6d6d6;border-radius:5px"></div>
<div class="t" style="left:630px;top:1201px;font-size:26px;color:#333">200</div>
<svg style="left:795px;top:1198px" width="34" height="32" viewBox="0 0 34 32"><path d="M2 3H10C14 3 17 6 17 10V16M32 3H24C20 3 17 6 17 10" fill="none" stroke="#4a87c7" stroke-width="3"/><path d="M12 13L17 18.5L22 13" fill="none" stroke="#4a87c7" stroke-width="3"/><path d="M3 20V29.5H31V20" fill="none" stroke="#4a87c7" stroke-width="3"/></svg>
<div class="t bt" style="left:836px;top:1201px;font-size:25px;color:#595959;transform:scaleX(.97)">200+</div>
<svg style="left:922px;top:1202px" width="34" height="28" viewBox="0 0 34 28"><path d="M2 3.5H28M2 11.5H20M2 19.5H13" stroke="#4a87c7" stroke-width="3.6" stroke-linecap="round"/><path d="M22 14V28M15 21H29" stroke="#6cc241" stroke-width="3.4"/></svg>
<svg style="left:986px;top:1202px" width="34" height="28" viewBox="0 0 34 28"><path d="M2 3.5H28M2 11.5H20M2 19.5H13" stroke="#9ec1e4" stroke-width="3.6" stroke-linecap="round"/><text x="15" y="27" font-size="13" font-family="Liberation Sans" fill="#a9d39a">(+)</text></svg>
<svg style="left:1050px;top:1202px" width="34" height="28" viewBox="0 0 34 28"><path d="M2 3.5H28M2 11.5H20M2 19.5H13" stroke="#9ec1e4" stroke-width="3.6" stroke-linecap="round"/><path d="M18 22H31" stroke="#e89292" stroke-width="3"/></svg>
<svg style="left:1114px;top:1198px" width="36" height="32" viewBox="0 0 36 32"><path d="M12 2H28V14" fill="none" stroke="#9ec1e4" stroke-width="2" stroke-dasharray="2.5 2.5"/><rect x="3" y="10.5" width="12" height="17" fill="#eaf1f8" stroke="#9ec1e4" stroke-width="3"/><path d="M14 20C20 22 26 22 30 17M26 16L30 17L31 21" fill="none" stroke="#9ec1e4" stroke-width="2.4"/></svg>
<svg style="left:1179px;top:1200px" width="32" height="30" viewBox="0 0 32 30"><path d="M8 22C3 22 1 19 1 15.5C1 12 4 9.5 7.5 10C8.5 5 12 2 16.5 2C21.5 2 25 6 25 10.5C28.5 10.5 31 13 31 16.5C31 19.5 28.5 22 25 22" fill="none" stroke="#a9d39a" stroke-width="2.4"/><path d="M16 28V13M10.5 18.5L16 13L21.5 18.5" fill="none" stroke="#a9d39a" stroke-width="2.6"/></svg>
<div class="t bt" style="left:1219px;top:1201px">SAVE</div>
<svg style="left:1310px;top:1199px" width="34" height="32" viewBox="0 0 34 32"><path d="M10 2H28V14" fill="none" stroke="#9ec1e4" stroke-width="2" stroke-dasharray="2.5 2.5"/><path d="M3 9H15V13M3 9V30H16" fill="none" stroke="#9ec1e4" stroke-width="3"/><path d="M19 20L28 29M28 20L19 29" stroke="#e89292" stroke-width="3"/></svg>
<div class="t bt" style="left:1350px;top:1201px">REVERT</div>
<svg style="left:1469px;top:1199px" width="34" height="32" viewBox="0 0 34 32"><path d="M3 28H14M6 28V2H24V7" fill="none" stroke="#9ec1e4" stroke-width="3"/><circle cx="22" cy="20" r="6" fill="none" stroke="#9ec1e4" stroke-width="2.6"/><path d="M26 24L31 30" stroke="#9ec1e4" stroke-width="2.8"/></svg>
<div class="t bt" style="left:1510px;top:1201px">SCRIPT</div>
<svg style="left:1626px;top:1200px" width="28" height="28" viewBox="0 0 28 28"><path d="M1 3H26" stroke="#4a87c7" stroke-width="3"/><path d="M13.5 26V9M7 15L13.5 8.5L20 15" fill="none" stroke="#4a87c7" stroke-width="3"/></svg>
<div class="t bt" style="left:1665px;top:1201px;color:#595959">EXPORT</div>
<div class="t" style="left:2204px;top:1201px;font-size:26px;color:#666;letter-spacing:-0.1px">200 row(s) fetched - 92ms</div>
</body></html>
